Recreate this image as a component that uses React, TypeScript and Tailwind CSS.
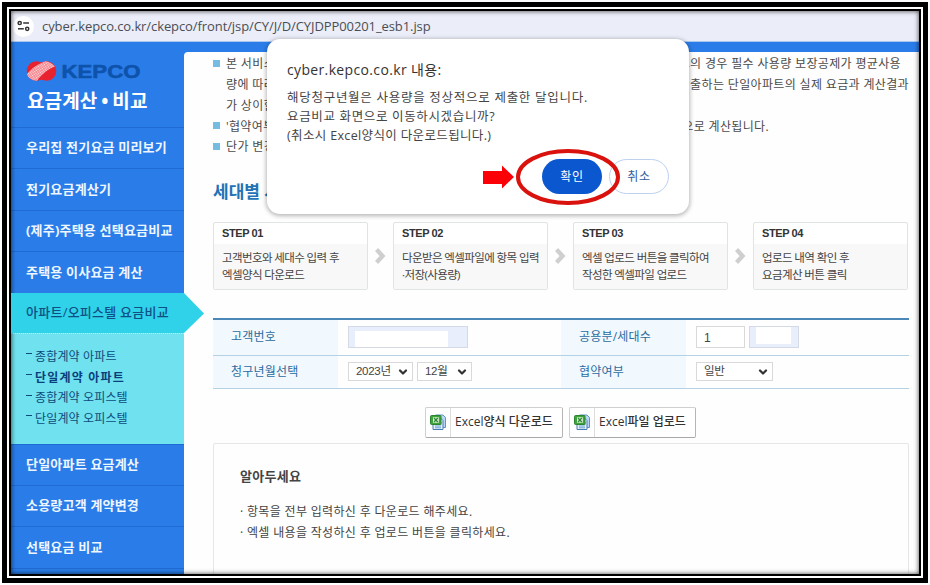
import React from 'react';
import clsx from 'clsx';
import { ChevronDown } from 'lucide-react';

const upperMenu = [
  { label: '우리집 전기요금 미리보기' },
  { label: '전기요금계산기' },
  { label: '(제주)주택용 선택요금비교' },
  { label: '주택용 이사요금 계산' },
];

const lowerMenu = [
  { label: '단일아파트 요금계산' },
  { label: '소용량고객 계약변경' },
  { label: '선택요금 비교' },
];

const subMenu = [
  { label: '종합계약 아파트', active: false },
  { label: '단일계약 아파트', active: true },
  { label: '종합계약 오피스텔', active: false },
  { label: '단일계약 오피스텔', active: false },
];

const notices = [
  { bullet: true, left: '본 서비스', right: '트의 경우 필수 사용량 보장공제가 평균사용', end: 'pr-[18px]' },
  { bullet: false, left: '량에 따라', right: '출하는 단일아파트의 실제 요금과 계산결과', end: 'pr-[10px]' },
  { bullet: false, left: '가 상이할', right: '', end: '' },
  { bullet: true, left: "'협약여부", right: '으로 계산됩니다.', end: 'pr-[150px]' },
  { bullet: true, left: '단가 변경', right: '', end: '' },
];

const steps = [
  { title: 'STEP 01', lines: ['고객번호와 세대수 입력 후', '엑셀양식 다운로드'] },
  { title: 'STEP 02', lines: ['다운받은 엑셀파일에 항목 입력', '·저장(사용량)'] },
  { title: 'STEP 03', lines: ['엑셀 업로드 버튼을 클릭하여', '작성한 엑셀파일 업로드'] },
  { title: 'STEP 04', lines: ['업로드 내역 확인 후', '요금계산 버튼 클릭'] },
];

export default function App() {
  return (
    <div className="w-[930px] h-[585px] bg-white p-[2px] font-['Open_Sans','Noto_Sans_CJK_KR',sans-serif] text-[#444]">
      <div className="h-full border-5 border-black">
        <div className="h-full border-2 border-white">
          <div className="h-full border-2 border-black">
            <div className="relative h-full overflow-hidden bg-white flex flex-col">
              <AddressBar />
              <div className="flex flex-1 min-h-0 bg-[#2a7de9]">
                <Sidebar />
                <Content />
              </div>
              <ConfirmDialog />
              <div className="absolute inset-0 pointer-events-none shadow-[inset_0_0_5px_rgba(0,0,0,0.75)]" />
            </div>
          </div>
        </div>
      </div>
    </div>
  );
}

function AddressBar() {
  return (
    <div className="h-[31px] shrink-0 bg-[#ebedf8] border-b border-[#a9c8ee] flex items-center pl-[2px]">
      <div className="w-[21px] h-[21px] rounded-full bg-white flex items-center justify-center">
        <svg width="13" height="12" viewBox="0 0 13 12" fill="none" stroke="#333" strokeWidth="1.5">
          <circle cx="2.7" cy="3" r="1.6" />
          <path d="M6.2 3H12" />
          <circle cx="10.2" cy="8.8" r="1.6" />
          <path d="M1 8.8H6.8" />
        </svg>
      </div>
      <span className="ml-[8px] text-[13px] leading-none tracking-[-0.09px] text-[#4a4d55] whitespace-nowrap">
        cyber.kepco.co.kr/ckepco/front/jsp/CY/J/D/CYJDPP00201_esb1.jsp
      </span>
    </div>
  );
}

function MenuItem({ label }: { label: string }) {
  return (
    <div className="h-[41.4px] border-t border-[#1f6bd3] pl-[15px] flex items-center text-[13px] tracking-[0.2px] font-bold text-[#eef6ff] whitespace-nowrap">
      {label}
    </div>
  );
}

function Sidebar() {
  return (
    <nav className="w-[173px] shrink-0 relative">
      <div className="h-[85px] pt-[18px] pl-[15px]">
        <KepcoLogo />
        <div className="text-[19px] leading-[24px] mt-[5px] pl-px font-bold tracking-[0.1px] text-white whitespace-nowrap flex">
          요금계산<span className="w-[15px] text-center">•</span>비교
        </div>
      </div>
      {upperMenu.map((item) => (
        <MenuItem key={item.label} label={item.label} />
      ))}

      {/* Active item with its pointer */}
      <div className="relative z-10 h-[40px] bg-[#2fd2e8] pl-[15px] flex items-center text-[13px] tracking-[0.25px] font-medium text-[#0f4f86] whitespace-nowrap">
        아파트/오피스텔 요금비교
        <svg className="absolute left-full top-0" width="20" height="40" viewBox="0 0 20 40">
          <path d="M0 0L20 20.5L0 40Z" fill="#2fd2e8" />
        </svg>
      </div>
      <ul className="h-[111px] bg-[#70e1ee] border-t border-dotted border-[#b9f1f7] pt-[13px] pl-[15px] text-[12px] tracking-[0.15px] text-[#0d4b7c]">
        {subMenu.map((item) => (
          <li
            key={item.label}
            className={clsx(
              'h-[20.7px] flex items-center whitespace-nowrap',
              item.active && 'font-bold tracking-[1.2px] text-[#0a3f7d]',
            )}
          >
            <span className="w-[6px] h-px bg-[#0d4b7c] mr-[3px] -mt-[6px]" />
            {item.label}
          </li>
        ))}
      </ul>
      {lowerMenu.map((item) => (
        <MenuItem key={item.label} label={item.label} />
      ))}
      <div className="border-t border-[#1f6bd3]" />
    </nav>
  );
}

function KepcoLogo() {
  return (
    <svg width="118" height="24" viewBox="0 0 118 24" className="block">
      <defs>
        <pattern id="mesh" width="2" height="2" patternUnits="userSpaceOnUse" patternTransform="rotate(-35)">
          <rect width="2" height="2" fill="#f58b93" />
          <rect width="1" height="1" fill="#ffe4e6" />
        </pattern>
      </defs>
      <circle cx="10.5" cy="11" r="9.8" fill="#e8222e" />
      <circle cx="20.5" cy="11" r="9.8" fill="#e8222e" />
      <path d="M1 14C6 8 13 3 20 1.2C24 2 27 4 29 6.5C22 9 16 14 11 20.7C6 20.5 2 18 1 14Z" fill="url(#mesh)" />
      <text
        x="35.5"
        y="17.7"
        textLength="79"
        lengthAdjust="spacingAndGlyphs"
        fontFamily="Liberation Sans, sans-serif"
        fontSize="19"
        fontWeight="700"
        fill="#0e53ab"
        stroke="#0e53ab"
        strokeWidth="0.6"
        strokeLinejoin="round"
      >
        KEPCO
      </text>
    </svg>
  );
}

function Content() {
  return (
    <main className="flex-1 mt-[10px] bg-[#fefefe] rounded-tl-[4px] pl-[29px] pt-[2px] min-w-0">
      <ul className="text-[12px] tracking-[0.35px] text-[#4b4b4b]">
        {notices.map((row) => (
          <li key={row.left} className={clsx('h-[20.75px] flex items-center justify-between whitespace-nowrap', row.end)}>
            <span className="flex items-center">
              <span className={clsx('w-[7px] h-[7px] mr-[6px] -mt-[2px]', row.bullet && 'bg-[#74bce2]')} />
              {row.left}
            </span>
            <span>{row.right}</span>
          </li>
        ))}
      </ul>
      <h2 className="mt-[21px] h-[26px] leading-[26px] text-[17px] font-bold text-[#2273b5]">세대별 사</h2>

      <div className="mt-[17px] flex">
        {steps.map((step, i) => (
          <React.Fragment key={step.title}>
            {i > 0 && (
              <div className="w-[25px] flex items-center justify-center">
                <svg width="11" height="16" viewBox="0 0 11 16" fill="none" stroke="#cfcfcf" strokeWidth="4.4">
                  <path d="M1.5 1.5L7.5 8L1.5 14.5" />
                </svg>
              </div>
            )}
            <div className="w-[155px] h-[68px] border border-[#e0e4e5] rounded-[2px] bg-white">
              <div className="h-[21px] pl-[8px] leading-[21px] font-['Liberation_Sans',sans-serif] text-[11px] font-bold tracking-[-0.4px] text-[#333]">
                {step.title}
              </div>
              <div className="h-[45px] bg-[#f8f8f8] pl-[8px] pt-[5px] text-[11.5px] leading-[17px] tracking-[-0.6px] whitespace-nowrap">
                {step.lines.map((line) => (
                  <div key={line}>{line}</div>
                ))}
              </div>
            </div>
          </React.Fragment>
        ))}
      </div>

      <div className="w-[696px] mt-[28px] border-t-2 border-[#4b88b8]">
        <div className="h-[36px] flex border-b border-[#b3d2e6]">
          <Label>고객번호</Label>
          <div className="w-[223px] pl-[10px] flex items-center">
            <div className="w-[120px] h-[22px] bg-[#e8eefb] border border-[#d3dae6] pl-[6px] pt-[4px]">
              <div className="w-[93px] h-[16px] bg-white" />
            </div>
          </div>
          <Label>공용분/세대수</Label>
          <div className="pl-[10px] flex items-center gap-[4px]">
            <div className="w-[49px] h-[22px] bg-white border border-[#d9d9d9] pl-[7px] text-[12px] leading-[22px] font-['Liberation_Sans',sans-serif]">
              1
            </div>
            <div className="w-[50px] h-[22px] bg-[#e8eefb] border border-[#d3dae6] pl-[6px]">
              <div className="w-[35px] h-[17px] bg-white" />
            </div>
          </div>
        </div>
        <div className="h-[33px] flex border-b border-[#b3d2e6]">
          <Label>청구년월선택</Label>
          <div className="w-[223px] pl-[10px] flex items-center gap-[4px]">
            <SelectBox className="w-[65px]">2023년</SelectBox>
            <SelectBox className="w-[55px]">12월</SelectBox>
          </div>
          <Label>협약여부</Label>
          <div className="pl-[10px] flex items-center">
            <SelectBox className="w-[77px]">일반</SelectBox>
          </div>
        </div>
      </div>

      <div className="mt-[18px] pl-[212px] flex gap-[6px]">
        <ExcelButton className="w-[138px]">Excel양식 다운로드</ExcelButton>
        <ExcelButton className="w-[127px]">Excel파일 업로드</ExcelButton>
      </div>

      <div className="mt-[5px] w-[696px] h-[140px] border border-[#e6e6e6] rounded-[2px] pl-[26px] pt-[21px]">
        <h3 className="text-[13px] leading-[22px] font-bold tracking-[0.3px] text-[#444]">알아두세요</h3>
        <div className="mt-[14px] text-[12px] leading-[21px] tracking-[0.33px]">
          <div><span className="inline-block w-[7px]">·</span>항목을 전부 입력하신 후 다운로드 해주세요.</div>
          <div><span className="inline-block w-[7px]">·</span>엑셀 내용을 작성하신 후 업로드 버튼을 클릭하세요.</div>
        </div>
      </div>
    </main>
  );
}

function Label({ children }: { children: React.ReactNode }) {
  return (
    <div className="w-[125px] bg-[#f1f9fe] pl-[18px] flex items-center text-[12px] tracking-[0.2px] text-[#2c6b9e] whitespace-nowrap">
      {children}
    </div>
  );
}

function SelectBox({ children, className }: { children: React.ReactNode; className: string }) {
  return (
    <div
      className={clsx(
        "h-[19px] border border-[#d9d9d9] bg-white pl-[7px] pr-[3px] flex items-center justify-between text-[11.5px] tracking-[-0.3px] whitespace-nowrap font-['Liberation_Sans','Noto_Sans_CJK_KR',sans-serif]",
        className,
      )}
    >
      {children}
      <ChevronDown size={12} strokeWidth={4.5} className="text-[#333]" />
    </div>
  );
}

function ExcelButton({ children, className }: { children: React.ReactNode; className: string }) {
  return (
    <div className={clsx('h-[31px] flex border border-[#d0d0d0] border-b-[#a8a8a8] border-r-[#b5b5b5] rounded-[2px] bg-white', className)}>
      <div className="w-[25px] border-r border-[#dcdcdc] flex items-center justify-center">
        <ExcelIcon />
      </div>
      <div className="flex-1 pl-[4px] flex items-center text-[12px] font-medium text-[#333] whitespace-nowrap">{children}</div>
    </div>
  );
}

function ExcelIcon() {
  return (
    <svg width="16" height="16" viewBox="0 0 16 16">
      <path d="M5.5 1H13L15.5 3.5V13.5H5.5Z" fill="#b9d6f2" stroke="#5f93c6" />
      <path d="M3 4H10.5L13 6.5V15.5H3Z" fill="#e3f0fb" stroke="#4a7db3" />
      <path d="M5 12H11M5 13.8H11M11 8V11" stroke="#6fa0d0" />
      <rect x="0.5" y="1.5" width="10.5" height="9" rx="1" fill="#3fa43b" stroke="#2c8430" />
      <rect x="3" y="3.3" width="5.8" height="5.4" fill="#eaf8e6" />
      <path d="M4 4L7.8 8M7.8 4L4 8" stroke="#2c8430" strokeWidth="1.3" />
    </svg>
  );
}

function ConfirmDialog() {
  return (
    <div className="absolute left-[256px] top-[28px] w-[422px] h-[175px] rounded-[13px] bg-white shadow-[0_1px_4px_1px_rgba(0,0,0,0.28)] pl-[20px] pt-[20px]">
      <div className="text-[14px] leading-[22px] text-[#333] tracking-[0.35px] whitespace-nowrap">cyber.kepco.co.kr 내용:</div>
      <div className="mt-[7px] text-[12.5px] leading-[19px] text-[#444] whitespace-nowrap">
        <div className="tracking-[0.72px]">해당청구년월은 사용량을 정상적으로 제출한 달입니다.</div>
        <div className="tracking-[0.65px]">요금비교 화면으로 이동하시겠습니까?</div>
        <div className="tracking-[0.35px]">(취소시 Excel양식이 다운로드됩니다.)</div>
      </div>
      <div className="mt-[14px] pr-[20px] flex justify-end gap-[7px] text-[12px]">
        <button className="w-[60px] h-[35px] rounded-full bg-[#0b57d0] text-white tracking-[0.6px]">확인</button>
        <button className="w-[60px] h-[35px] rounded-full border border-[#bdd0ee] text-[#2f5e9e] tracking-[0.6px]">취소</button>
      </div>

      {/* Highlight around the confirm button */}
      <svg className="absolute left-[214px] top-[106px]" width="142" height="64" viewBox="0 0 142 64">
        <ellipse cx="87" cy="32" rx="50" ry="26" fill="none" stroke="#d9120e" strokeWidth="4" />
        <path d="M2 26H21V20.5L33 32L21 43.5V39H2Z" fill="#fb0007" />
      </svg>
    </div>
  );
}
